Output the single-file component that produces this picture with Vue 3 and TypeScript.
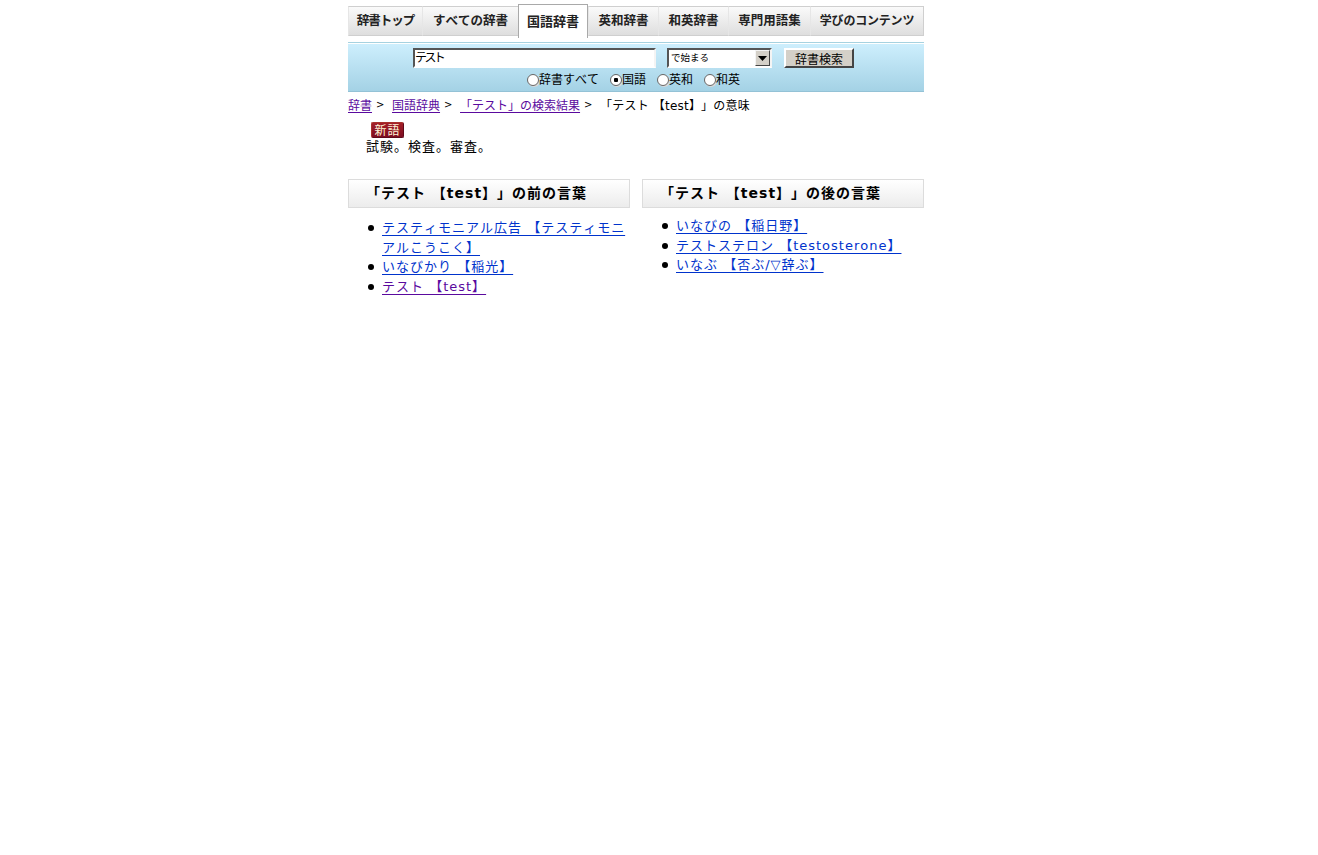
<script setup lang="ts">
const tabs = ['辞書トップ', 'すべての辞書', '国語辞書', '英和辞書', '和英辞書', '専門用語集', '学びのコンテンツ']
const scopes = ['辞書すべて', '国語', '英和', '和英']
const crumbs = ['辞書', '国語辞典', '「テスト」の検索結果']
const prev = [
  { text: 'テスティモニアル広告 【テスティモニアルこうこく】', seen: false },
  { text: 'いなびかり 【稲光】', seen: false },
  { text: 'テスト 【test】', seen: true },
]
const next = ['いなびの 【稲日野】', 'テストステロン 【testosterone】', 'いなぶ 【否ぶ/▽辞ぶ】']
</script>

<template>
  <div class="page">
    <nav class="tabs">
      <a v-for="(t, i) in tabs" :key="t" class="tab" :class="{ active: i === 2, narrow: i === 6, tight: i === 0 }">{{ t }}</a>
    </nav>

    <form class="search" @submit.prevent>
      <div class="fields">
        <input class="query" type="text" value="テスト" />
        <div class="select-wrap">
          <select class="mode"><option>で始まる</option></select>
          <span class="arrow"><svg width="9" height="5" viewBox="0 0 9 5"><path d="M0 0h9L4.5 5z" fill="#000" /></svg></span>
        </div>
        <button class="submit" type="button">辞書検索</button>
      </div>
      <div class="scopes">
        <label v-for="(s, i) in scopes" :key="s" class="scope">
          <input class="radio" type="radio" name="scope" :checked="i === 1" />{{ s }}
        </label>
      </div>
    </form>

    <div class="crumbs">
      <template v-for="c in crumbs" :key="c">
        <a class="crumb">{{ c }}</a><span class="sep">&gt;</span>
      </template>
      <span class="current">「テスト 【test】」の意味</span>
    </div>

    <section class="entry">
      <span class="badge">新語</span>
      <p class="definition">試験。検査。審査。</p>
    </section>

    <div class="columns">
      <section class="column">
        <h3 class="heading">「テスト 【test】」の前の言葉</h3>
        <ul class="words before">
          <li v-for="w in prev" :key="w.text"><a class="word" :class="{ seen: w.seen }">{{ w.text }}</a></li>
        </ul>
      </section>
      <section class="column">
        <h3 class="heading">「テスト 【test】」の後の言葉</h3>
        <ul class="words">
          <li v-for="w in next" :key="w"><a class="word">{{ w }}</a></li>
        </ul>
      </section>
    </div>
  </div>
</template>

<style>
html, body { background: #fff; }
</style>

<style scoped>
.page {
  width: 576px;
  margin-left: 348px;
  padding-top: 4px;
  font-family: "DejaVu Sans", "Noto Sans CJK JP", sans-serif;
  font-size: 12px;
  color: #000;
  text-spacing-trim: space-all;
  font-kerning: none;
}
.tabs {
  display: grid;
  grid-template-columns: 74px 96px 70px 70px 70px 82px 114px;
  align-items: center;
  height: 34px;
}
.tab {
  height: 30px;
  box-sizing: border-box;
  display: flex;
  align-items: center;
  justify-content: center;
  padding-bottom: 3px;
  border: 1px solid #cfcfcf;
  border-left-color: #e6e6e6;
  border-right: 0;
  background: linear-gradient(#fafafa, #dedede);
  font-weight: 700;
  font-size: 12.5px;
  color: #222;
  white-space: nowrap;
}
.tab:last-child { border-right: 1px solid #cfcfcf; }
.tab.narrow { font-size: 12px; letter-spacing: -0.2px; }
.tab.tight { letter-spacing: -1px; }
.tab.active {
  height: 34px;
  border: 1px solid #a9a9a9;
  border-bottom: 0;
  background: #fff;
  font-size: 13px;
  padding-bottom: 2px;
}
.search {
  margin-top: 4px;
  height: 50px;
  box-sizing: border-box;
  border-top: 1px solid #a6d2e0;
  padding-top: 1px;
  background-clip: content-box;
  background-image: linear-gradient(#ceeffd, #a4d2e5);
  border-bottom: 1px solid #94c2d6;
}
.fields {
  display: flex;
  align-items: center;
  gap: 11px;
  padding: 4px 0 0 65px;
}
.query {
  width: 243px;
  height: 20px;
  box-sizing: border-box;
  padding: 0 0 4px;
  margin: 0;
  border: 2px solid;
  border-color: #555 #f4f4f4 #fff #555;
  background: #fff;
  font: 12px "Noto Sans CJK JP", sans-serif;
  letter-spacing: -2.6px;
  outline: 0;
}
.select-wrap { position: relative; width: 105px; height: 20px; }
.mode {
  appearance: none;
  width: 100%;
  height: 100%;
  box-sizing: border-box;
  margin: 0;
  padding: 0 2px 2px;
  border: 2px solid;
  border-color: #555 #f4f4f4 #fff #555;
  border-radius: 0;
  background: #fff;
  font: 9.5px "Noto Sans CJK JP", sans-serif;
}
.arrow {
  position: absolute;
  top: 2px;
  right: 2px;
  width: 15px;
  height: 16px;
  box-sizing: border-box;
  display: flex;
  align-items: center;
  justify-content: center;
  background: #d4d0c8;
  border: 1px solid;
  border-color: #f4f4f4 #444 #444 #f4f4f4;
  pointer-events: none;
}
.submit {
  width: 70px;
  height: 20px;
  margin-left: 1px;
  padding: 0 0 2px;
  box-sizing: border-box;
  border: 2px solid;
  border-color: #fff #444 #444 #fff;
  background: #d4d0c8;
  font: 12px "Noto Sans CJK JP", sans-serif;
  color: #000;
}
.scopes {
  display: flex;
  padding: 2px 0 0 179px;
  gap: 11px;
  line-height: 20px;
}
.scope {
  display: flex;
  align-items: center;
}
.radio {
  appearance: none;
  width: 12px;
  height: 12px;
  box-sizing: border-box;
  margin: 0;
  border: 1px solid #666;
  border-radius: 50%;
  background: #fff;
  box-shadow: 1px 1px 0 #d8d8d8;
}
.radio:checked { background: radial-gradient(circle, #000 0 2px, #fff 2.5px); }
.crumbs {
  display: flex;
  align-items: center;
  height: 24px;
  font-size: 12px;
  white-space: nowrap;
}
.crumb {
  color: #5a0a9e;
  text-decoration: underline;
  text-underline-offset: 2px;
}
.sep { width: 6px; margin: 0 10px 0 4px; font-size: 10px; }
.current { letter-spacing: 0.2px; }
.entry { padding: 6px 0 0 18px; height: 55px; box-sizing: border-box; }
.badge {
  display: flex;
  align-items: center;
  justify-content: center;
  width: 33px;
  height: 16px;
  margin: 0 0 -1px 5px;
  border-radius: 2px;
  border: 1px solid #a8322c;
  border-right-color: #5e0a1a;
  border-bottom-color: #5e0a1a;
  box-sizing: border-box;
  background: linear-gradient(#a51f28, #7d0d22);
  color: #fff6d8;
  font-family: "Noto Sans CJK JP", sans-serif;
  font-size: 12px;
  line-height: 1;
  letter-spacing: 1px;
}
.definition {
  margin: 0;
  font-size: 13px;
  line-height: 19px;
  letter-spacing: 1px;
}
.columns {
  display: grid;
  grid-template-columns: 282px 282px;
  gap: 12px;
  margin-top: 8px;
}
.heading {
  margin: 0;
  height: 29px;
  box-sizing: border-box;
  border: 1px solid #dcdcdc;
  padding-left: 17px;
  background: linear-gradient(#fff, #ececec);
  font-size: 14px;
  font-weight: 700;
  line-height: 26px;
  letter-spacing: 1px;
  white-space: nowrap;
}
.words {
  margin: 8px 0 0;
  padding: 0 0 0 34px;
  list-style: none;
  font-size: 13px;
  line-height: 19.6px;
  letter-spacing: 1px;
}
.words.before { margin-top: 10px; }
.words li { position: relative; }
.words li::before {
  content: "";
  position: absolute;
  left: -14px;
  top: 7px;
  width: 6px;
  height: 6px;
  border-radius: 50%;
  background: #000;
}
.word {
  color: #0033cc;
  text-decoration: underline;
  text-underline-offset: 3px;
}
.word.seen { color: #5a0a9e; }
</style>
